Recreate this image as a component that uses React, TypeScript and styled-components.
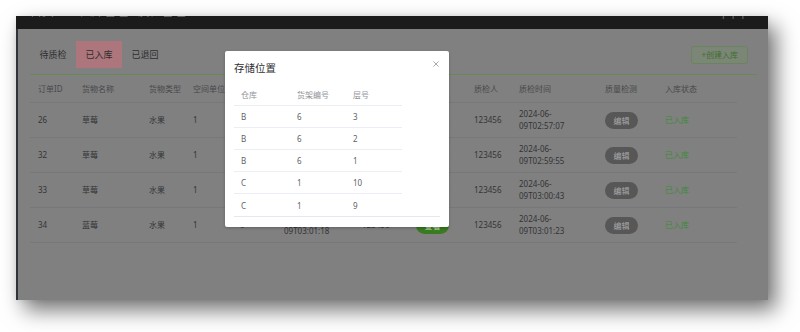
import React from 'react';
import styled, { createGlobalStyle } from 'styled-components';

const GlobalStyle = createGlobalStyle`
  html, body { margin: 0; padding: 0; background: #ffffff; }
  body { font-family: "Noto Sans", "Noto Sans CJK SC", sans-serif; }
  * { box-sizing: border-box; }
`;

const Stage = styled.div`
  width: 800px;
  height: 332px;
  padding: 16px 0 0 16px;
  overflow: hidden;
  background: #ffffff;
`;

const Window = styled.div`
  position: relative;
  width: 752px;
  height: 284px;
  display: flex;
  flex-direction: column;
  box-shadow: 8px 10px 20px rgba(0, 0, 0, 0.55), 0 0 6px rgba(0, 0, 0, 0.08);
`;

const TitleBar = styled.div`
  flex: none;
  height: 13px;
  background: #1b1b1b;
  overflow: hidden;
  display: flex;
  justify-content: space-between;
  padding: 0 22px 0 14px;
`;

const BarNav = styled.div`
  display: flex;
  gap: 26px;
`;

const BarText = styled.span`
  margin-top: -11px;
  font-size: 12px;
  line-height: 13px;
  color: #6f6f6f;
  white-space: nowrap;
`;

const Body = styled.div`
  flex: 1;
  background: #808080;
  border-left: 2px solid #30343a;
  padding: 12px 11px 0 12px;
`;

const TabsHeader = styled.div`
  display: flex;
  align-items: center;
  justify-content: space-between;
  padding-bottom: 6px;
  border-bottom: 1px solid #658a55;
`;

const Tabs = styled.div`
  display: flex;
`;

const Tab = styled.div<{ $active?: boolean }>`
  height: 27px;
  line-height: 27px;
  padding: 0 9.5px;
  font-size: 9px;
  color: #2e2e2e;
  background: ${(p) => (p.$active ? '#ad767d' : 'transparent')};
`;

const CreateButton = styled.button`
  margin-right: 9px;
  height: 18px;
  padding: 0 9px;
  font-family: inherit;
  font-size: 8px;
  line-height: 16px;
  color: #3f6f2e;
  background: #7b8677;
  border: 1px solid #6a8460;
  border-radius: 3px;
`;

const COLS = '44px 67px 44px 47px 44px 78px 54px 58px 45px 86px 60px 80px';

const Row = styled.div<{ $h: number }>`
  display: grid;
  grid-template-columns: ${COLS};
  width: 707px;
  height: ${(p) => p.$h}px;
  align-items: center;
  border-bottom: 1px solid #76787b;
`;

const HeadCell = styled.div`
  padding-left: 8px;
  font-size: 8px;
  line-height: 12px;
  color: #47484b;
  white-space: nowrap;
`;

const Cell = styled.div`
  padding-left: 8px;
  font-size: 8px;
  line-height: 12.5px;
  color: #333436;
  white-space: nowrap;
`;

const StatusText = styled(Cell)`
  color: #3d8b37;
`;

const PillButton = styled.span<{ $tone: 'gray' | 'green' }>`
  display: inline-flex;
  align-items: center;
  justify-content: center;
  width: 33px;
  height: 17px;
  border-radius: 9px;
  font-size: 8px;
  color: ${(p) => (p.$tone === 'gray' ? '#a9a9a9' : '#c6dcb8')};
  background: ${(p) => (p.$tone === 'gray' ? '#575757' : '#3a7a20')};
`;

const ButtonCell = styled.div`
  padding-left: 8px;
  display: flex;
`;

const Dialog = styled.div`
  position: absolute;
  left: 209px;
  top: 35px;
  width: 224px;
  background: #ffffff;
  border-radius: 2px;
  box-shadow: 0 1px 3px rgba(0, 0, 0, 0.25);
`;

const DialogHeader = styled.div`
  position: relative;
  padding: 10px 9px 0;
`;

const DialogTitle = styled.div`
  font-size: 10.5px;
  line-height: 14px;
  color: #303133;
`;

const CloseIcon = styled.svg`
  position: absolute;
  top: 10px;
  right: 10px;
  width: 6px;
  height: 6px;
`;

const DialogBody = styled.div`
  padding: 8px 9px 10px;
`;

const InnerTable = styled.div`
  border-bottom: 1px solid #e6e8f0;
`;

const InnerRow = styled.div<{ $h: number }>`
  display: grid;
  grid-template-columns: 56px 56px 56px;
  width: 168px;
  height: ${(p) => p.$h}px;
  align-items: center;
  border-bottom: 1px solid #ebeef5;
  &:last-child {
    border-bottom: none;
  }
`;

const InnerHead = styled.div`
  padding-left: 7px;
  font-size: 8px;
  color: #909399;
`;

const InnerCell = styled.div`
  padding-left: 7px;
  font-size: 8px;
  color: #606266;
`;

type Order = {
  id: number;
  name: string;
  created: string;
  checked: string;
};

const orders: Order[] = [
  { id: 26, name: '草莓', created: '09T02:56:31', checked: '09T02:57:07' },
  { id: 32, name: '草莓', created: '09T02:59:20', checked: '09T02:59:55' },
  { id: 33, name: '草莓', created: '09T03:00:12', checked: '09T03:00:43' },
  { id: 34, name: '蓝莓', created: '09T03:01:18', checked: '09T03:01:23' },
];

const headers = ['订单ID', '货物名称', '货物类型', '空间单位', '数量', '入库时间', '操作人', '存储位置', '质检人', '质检时间', '质量检测', '入库状态'];

const locations: [string, string, string][] = [
  ['B', '6', '3'],
  ['B', '6', '2'],
  ['B', '6', '1'],
  ['C', '1', '10'],
  ['C', '1', '9'],
];

const DateCell = ({ time }: { time: string }) => (
  <Cell>
    2024-06-
    <br />
    {time}
  </Cell>
);

export default function App() {
  return (
    <>
      <GlobalStyle />
      <Stage>
        <Window>
          <TitleBar>
            <BarNav>
              <BarText>首页</BarText>
              <BarText>入库管理 · 质检管理</BarText>
            </BarNav>
            <BarText>| | |</BarText>
          </TitleBar>
          <Body>
            <TabsHeader>
              <Tabs>
                <Tab>待质检</Tab>
                <Tab $active>已入库</Tab>
                <Tab>已退回</Tab>
              </Tabs>
              <CreateButton>+创建入库</CreateButton>
            </TabsHeader>
            <Row $h={28}>
              {headers.map((h) => (
                <HeadCell key={h}>{h}</HeadCell>
              ))}
            </Row>
            {orders.map((o) => (
              <Row $h={35} key={o.id}>
                <Cell>{o.id}</Cell>
                <Cell>{o.name}</Cell>
                <Cell>水果</Cell>
                <Cell>1</Cell>
                <Cell>0</Cell>
                <DateCell time={o.created} />
                <Cell>123456</Cell>
                <ButtonCell>
                  <PillButton $tone="green">查看</PillButton>
                </ButtonCell>
                <Cell>123456</Cell>
                <DateCell time={o.checked} />
                <ButtonCell>
                  <PillButton $tone="gray">编辑</PillButton>
                </ButtonCell>
                <StatusText>已入库</StatusText>
              </Row>
            ))}
          </Body>
          <Dialog>
            <DialogHeader>
              <DialogTitle>存储位置</DialogTitle>
              <CloseIcon viewBox="0 0 6 6">
                <path d="M0.5 0.5 L5.5 5.5 M5.5 0.5 L0.5 5.5" stroke="#909399" strokeWidth="0.8" />
              </CloseIcon>
            </DialogHeader>
            <DialogBody>
              <InnerTable>
                <InnerRow $h={23}>
                  <InnerHead>仓库</InnerHead>
                  <InnerHead>货架编号</InnerHead>
                  <InnerHead>层号</InnerHead>
                </InnerRow>
                {locations.map((l, i) => (
                  <InnerRow $h={22} key={i}>
                    <InnerCell>{l[0]}</InnerCell>
                    <InnerCell>{l[1]}</InnerCell>
                    <InnerCell>{l[2]}</InnerCell>
                  </InnerRow>
                ))}
              </InnerTable>
            </DialogBody>
          </Dialog>
        </Window>
      </Stage>
    </>
  );
}
